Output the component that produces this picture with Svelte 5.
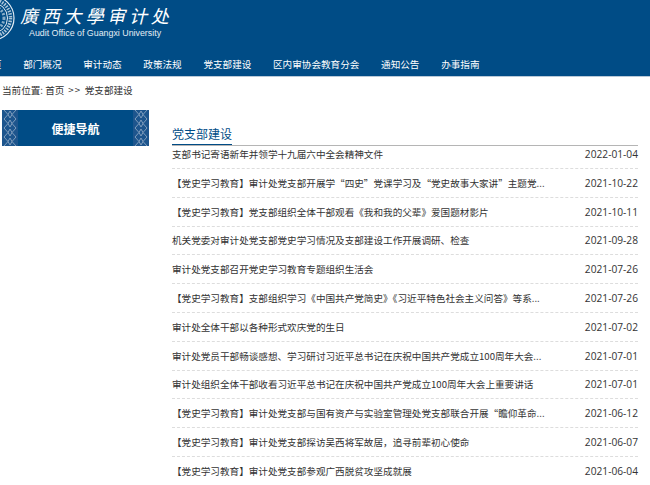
<script>
	const nav = ["首页", "部门概况", "审计动态", "政策法规", "党支部建设", "区内审协会教育分会", "通知公告", "办事指南"];
	const news = [
		["支部书记寄语新年并领学十九届六中全会精神文件", "2022-01-04"],
		["【党史学习教育】审计处党支部开展学“四史”党课学习及“党史故事大家讲”主题党...", "2021-10-22"],
		["【党史学习教育】党支部组织全体干部观看《我和我的父辈》爱国题材影片", "2021-10-11"],
		["机关党委对审计处党支部党史学习情况及支部建设工作开展调研、检查", "2021-09-28"],
		["审计处党支部召开党史学习教育专题组织生活会", "2021-07-26"],
		["【党史学习教育】支部组织学习《中国共产党简史》《习近平特色社会主义问答》等系...", "2021-07-26"],
		["审计处全体干部以各种形式欢庆党的生日", "2021-07-02"],
		["审计处党员干部畅谈感想、学习研讨习近平总书记在庆祝中国共产党成立100周年大会...", "2021-07-01"],
		["审计处组织全体干部收看习近平总书记在庆祝中国共产党成立100周年大会上重要讲话", "2021-07-01"],
		["【党史学习教育】审计处党支部与国有资产与实验室管理处党支部联合开展“瞻仰革命...", "2021-06-12"],
		["【党史学习教育】审计处党支部探访吴西将军故居，追寻前辈初心使命", "2021-06-07"],
		["【党史学习教育】审计处党支部参观广西脱贫攻坚成就展", "2021-06-04"]
	];
</script>

<div class="page">
	<header>
		<div class="banner">
			<svg class="seal" width="16" height="44" viewBox="0 0 16 44" fill="none" stroke="#e3ecf3">
				<circle cx="-8" cy="18" r="22" stroke-width="1.2" />
				<circle cx="-8" cy="18" r="18.5" stroke-width="3.5" stroke-dasharray="1.5 1.2" opacity="0.75" />
				<circle cx="-8" cy="18" r="15.5" stroke-width="1" />
				<circle cx="-8" cy="18" r="12" stroke-width="3" stroke-dasharray="2 1.5" opacity="0.6" />
			</svg>
			<div class="brand">
				<div class="cn">廣西大學审计处</div>
				<div class="en">Audit Office of Guangxi University</div>
			</div>
		</div>
		<nav>
			{#each nav as item}
				<a href="#top">{item}</a>
			{/each}
		</nav>
	</header>

	<div class="crumb">当前位置: 首页 <span class="sep">&gt;&gt;</span> 党支部建设</div>

	<div class="main">
		<aside>
			<div class="side-head">
				<svg class="orn" width="16" height="36" viewBox="0 0 16 36" fill="none" stroke="#7f9dbd" stroke-width="1">
					<path d="M2 0l4 4.5-4 4.5 4 4.5-4 4.5 4 4.5-4 4.5 4 4.5-4 4.5M14 0l-4 4.5 4 4.5-4 4.5 4 4.5-4 4.5 4 4.5-4 4.5 4 4.5" />
					<path d="M8 1l2 3.5-2 3.5-2-3.5zM8 10l2 3.5-2 3.5-2-3.5zM8 19l2 3.5-2 3.5-2-3.5zM8 28l2 3.5-2 3.5-2-3.5z" />
				</svg>
				<span>便捷导航</span>
				<svg class="orn" width="16" height="36" viewBox="0 0 16 36" fill="none" stroke="#7f9dbd" stroke-width="1">
					<path d="M2 0l4 4.5-4 4.5 4 4.5-4 4.5 4 4.5-4 4.5 4 4.5-4 4.5M14 0l-4 4.5 4 4.5-4 4.5 4 4.5-4 4.5 4 4.5-4 4.5 4 4.5" />
					<path d="M8 1l2 3.5-2 3.5-2-3.5zM8 10l2 3.5-2 3.5-2-3.5zM8 19l2 3.5-2 3.5-2-3.5zM8 28l2 3.5-2 3.5-2-3.5z" />
				</svg>
			</div>
		</aside>
		<section>
			<div class="title-bar"><h2>党支部建设</h2></div>
			<ul>
				{#each news as row}
					<li><span class="t">{row[0]}</span><span class="d">{row[1]}</span></li>
				{/each}
			</ul>
		</section>
	</div>
</div>

<style>
	:global(body) {
		margin: 0;
		background: #fff;
		overflow: hidden;
	}
	.page {
		width: 650px;
		height: 485px;
		overflow: hidden;
		font-family: "Noto Sans CJK SC", "Open Sans", sans-serif;
		font-size: 9.6px;
		color: #333;
	}
	header {
		background: #004c86;
		height: 76px;
		border-bottom: 1px solid #b9c9d8;
	}
	.banner {
		display: flex;
		height: 44px;
	}
	.seal {
		flex: none;
	}
	.brand {
		margin-left: 4px;
		color: #fff;
	}
	.cn {
		font-family: "Noto Sans CJK SC", serif;
		font-size: 18px;
		font-style: italic;
		line-height: 24px;
		letter-spacing: 3.8px;
		margin-top: 3px;
		white-space: nowrap;
	}
	.en {
		font-family: "Liberation Sans", Arial, sans-serif;
		font-size: 8.85px;
		line-height: 12px;
		margin-left: 9px;
		color: #e4edf4;
		white-space: nowrap;
	}
	nav {
		display: flex;
		height: 32px;
		padding-top: 8px;
		box-sizing: border-box;
		align-items: center;
		gap: 21.7px;
		margin-left: -17.7px;
		white-space: nowrap;
	}
	nav a {
		color: #fff;
		text-decoration: none;
	}
	.crumb {
		height: 26px;
		line-height: 26px;
		padding-left: 2px;
	}
	.sep {
		letter-spacing: 1.4px;
		margin: 0 1px 0 1.6px;
	}
	.main {
		display: flex;
		margin-top: 7px;
	}
	aside {
		width: 147px;
		margin-left: 2px;
		flex: none;
	}
	.side-head {
		display: flex;
		justify-content: space-between;
		align-items: center;
		height: 36px;
		background: #004c86;
		color: #fff;
		font-size: 12px;
		font-weight: 700;
	}
	.orn {
		background: #1d558d;
	}
	section {
		width: 466px;
		margin-left: 23px;
		margin-top: 15px;
		flex: none;
	}
	.title-bar {
		border-bottom: 1px solid #b5b5b5;
		height: 20px;
	}
	h2 {
		display: inline-block;
		margin: 0;
		font-weight: 400;
		font-size: 12px;
		line-height: 18px;
		height: 19px;
		color: #004c86;
		border-bottom: 1px solid #004c86;
	}
	ul {
		list-style: none;
		margin: 0;
		padding: 0;
	}
	li {
		display: flex;
		justify-content: space-between;
		align-items: center;
		height: 28.8px;
		box-sizing: border-box;
		border-bottom: 1px dashed #ddd;
	}
	li:first-child {
		height: 23px;
		align-items: flex-start;
		line-height: 17px;
	}
	.d {
		font-family: "Open Sans", sans-serif;
		font-size: 10.2px;
	}
</style>
